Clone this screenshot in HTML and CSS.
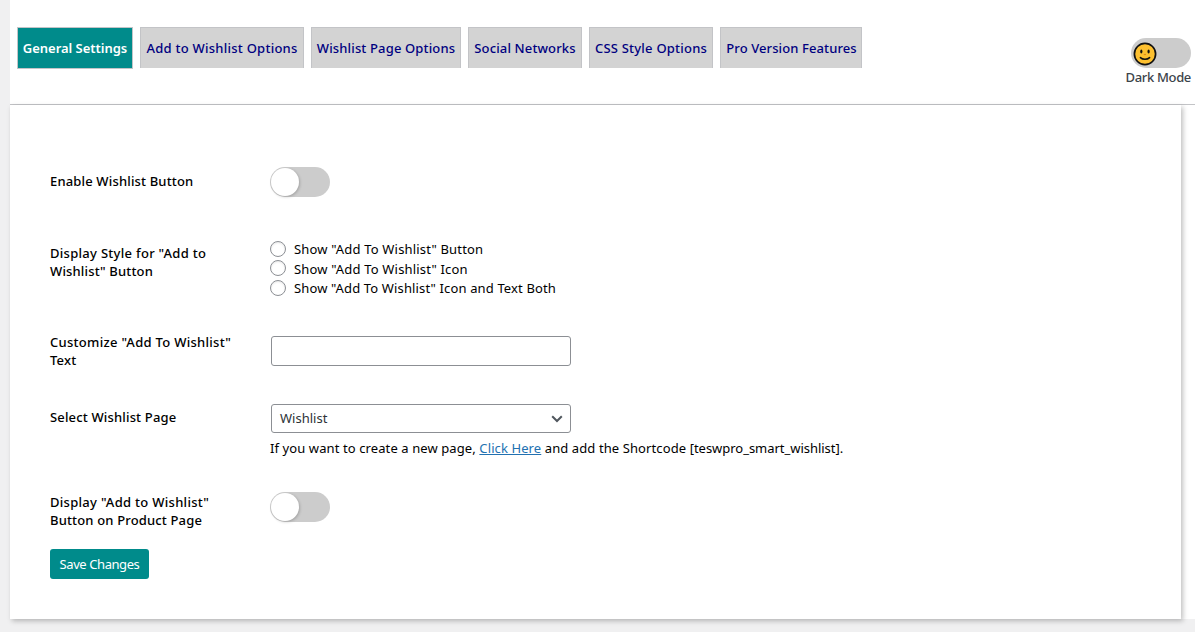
FILE: index.html
```html
<!DOCTYPE html>
<html lang="en">
<head>
<meta charset="utf-8">
<title>Wishlist Settings</title>
<link rel="stylesheet" href="styles.css">
</head>
<body>
<main class="wrap">
  <header class="topbar">
    <nav class="tabs">
      <a class="tab tab-general active"><span>General Settings</span></a>
      <a class="tab tab-add"><span>Add to Wishlist Options</span></a>
      <a class="tab tab-page"><span>Wishlist Page Options</span></a>
      <a class="tab tab-social"><span>Social Networks</span></a>
      <a class="tab tab-css"><span>CSS Style Options</span></a>
      <a class="tab tab-pro"><span>Pro Version Features</span></a>
    </nav>
    <div class="mode">
      <div class="switch mode-switch">
        <svg class="face" viewBox="0 0 24 24" width="24" height="24">
          <circle cx="12" cy="12" r="10.6" fill="#fdc02f" stroke="#111" stroke-width="1.7"/>
          <ellipse cx="8.3" cy="9.5" rx="1.1" ry="1.9" fill="#111"/>
          <ellipse cx="15.6" cy="9.5" rx="1.1" ry="1.9" fill="#111"/>
          <path d="M10.8 12.5h2.2" stroke="#e08a1c" stroke-width="1.2"/>
          <path d="M7.4 15.6c2.2 2.2 7 2.2 9.2 0" fill="none" stroke="#111" stroke-width="1.5" stroke-linecap="round"/>
        </svg>
      </div>
      <span class="mode-label">Dark Mode</span>
    </div>
  </header>
  <form class="panel">
    <div class="row row-enable">
      <div class="label">Enable Wishlist Button</div>
      <div class="switch"><i class="knob"></i></div>
    </div>
    <div class="row row-style">
      <div class="label"><span class="wide">Display Style for "Add to</span><br>Wishlist" Button</div>
      <div class="radios">
        <label class="radio"><i class="dot"></i><span>Show "Add To Wishlist" Button</span></label>
        <label class="radio"><i class="dot"></i><span class="lower">Show "Add To Wishlist" Icon</span></label>
        <label class="radio"><i class="dot"></i><span class="long">Show "Add To Wishlist" Icon and Text Both</span></label>
      </div>
    </div>
    <div class="row row-text">
      <div class="label"><span class="wide">Customize "Add To Wishlist"</span><br>Text</div>
      <div class="field"></div>
    </div>
    <div class="row row-select">
      <div class="label">Select Wishlist Page</div>
      <div>
        <div class="field select"><span class="value">Wishlist</span>
          <svg width="12" height="8" viewBox="0 0 12 8"><path d="M1.2 1.3L6 6l4.8-4.7" fill="none" stroke="#50575e" stroke-width="2"/></svg>
        </div>
        <p class="note">If you want to create a new page, <a class="link">Click Here</a> and add the Shortcode <span class="code">[teswpro_smart_wishlist].</span></p>
      </div>
    </div>
    <div class="row row-product">
      <div class="label"><span class="wide">Display "Add to Wishlist"</span><br>Button on Product Page</div>
      <div class="switch"><i class="knob"></i></div>
    </div>
    <div class="save">Save Changes</div>
  </form>
</main>
</body>
</html>
```
FILE: styles.css
```css
* { box-sizing: border-box; }
body {
  margin: 0;
  height: 632px;
  overflow: hidden;
  background: #f0f0f1;
  color: #000;
  font: 13px/18px "Noto Sans", "Open Sans", sans-serif;
}
.wrap { height: 619px; margin-left: 10px; background: #fff; }
.topbar {
  display: flex;
  justify-content: space-between;
  height: 105px;
  padding: 27px 4px 0 7px;
  border-bottom: 1px solid #c3c4c7;
}
.tabs { display: flex; gap: 7px; height: 41px; }
.tab {
  display: flex;
  align-items: center;
  justify-content: center;
  border: 1px solid #c3c4c7;
  border-bottom: 0;
  background: #d3d3d3;
  color: #000080;
  font-weight: 500;
  white-space: nowrap;
}
.tab.active { border-bottom: 1px solid #c3c4c7; height: 42px; padding-bottom: 1px; background: #008b8b; color: #fff; font-weight: 600; }
.tab-general { width: 116px; letter-spacing: -.03px; }
.tab-add { width: 164px; letter-spacing: .25px; }
.tab-page { width: 150px; letter-spacing: .15px; }
.tab-social { width: 114px; letter-spacing: .13px; }
.tab-css { width: 124px; letter-spacing: .22px; }
.tab-pro { width: 142px; padding-left: 1px; letter-spacing: .1px; }
.mode { display: flex; flex-direction: column; align-items: flex-end; padding-top: 11px; }
.mode-label { color: #3c434a; font-weight: 500; letter-spacing: -.33px; white-space: nowrap; }
.switch { width: 60px; height: 30px; border-radius: 15px; background: #ccc; }
.mode-switch { padding: 4px 0 0 2px; }
.face { display: block; }
.knob {
  display: block;
  width: 28px;
  height: 28px;
  margin: 1px;
  border-radius: 50%;
  background: #fff;
  box-shadow: 1px 1px 3px rgba(0, 0, 0, .2);
}
.switch:not(.mode-switch) { padding-top: 1px; }
.switch:not(.mode-switch) .knob { margin-top: 0; }
.panel {
  width: 1171px;
  height: 514px;
  padding: 62px 40px 0;
  background: #fff;
  box-shadow: 2px 2px 5px rgba(0, 0, 0, .25);
}
.row { display: grid; grid-template-columns: 220px 1fr; align-items: start; }
.label { font-weight: 500; letter-spacing: .16px; white-space: nowrap; }
.wide { letter-spacing: .29px; }
.row-enable { height: 72px; }
.row-enable .label { padding-top: 5px; }
.row-style { height: 94px; }
.row-style .label { padding-top: 5px; }
.radio { display: flex; align-items: center; gap: 8px; height: 19.5px; letter-spacing: .18px; }
.lower { padding-top: 1px; }
.long { letter-spacing: .14px; }
.dot {
  width: 16px;
  height: 16px;
  border: 1px solid #8c8f94;
  border-radius: 50%;
  box-shadow: inset 0 1px 2px rgba(0, 0, 0, .1);
}
.row-text { height: 71px; }
.row-text .field { margin-top: 3px; }
.field { width: 300px; height: 30px; margin-left: 1px; border: 1px solid #8c8f94; border-radius: 3px; }
.row-select { height: 88px; }
.row-select .label { padding-top: 4px; }
.select {
  display: flex;
  align-items: center;
  justify-content: space-between;
  height: 29px;
  padding: 0 7px 0 8px;
  color: #2c3338;
}
.value { padding-bottom: 1px; }
.note { margin: 6px 0 0; letter-spacing: .1px; white-space: nowrap; }
.code { letter-spacing: -.03px; }
.link { color: #2271b1; text-decoration: underline; }
.row-product { height: 57px; }
.row-product .label { padding-top: 1px; }
.save {
  display: flex;
  align-items: center;
  justify-content: center;
  width: 99px;
  height: 30px;
  border-radius: 3px;
  background: #008b8b;
  color: #fff;
  letter-spacing: -.42px;
}
```
